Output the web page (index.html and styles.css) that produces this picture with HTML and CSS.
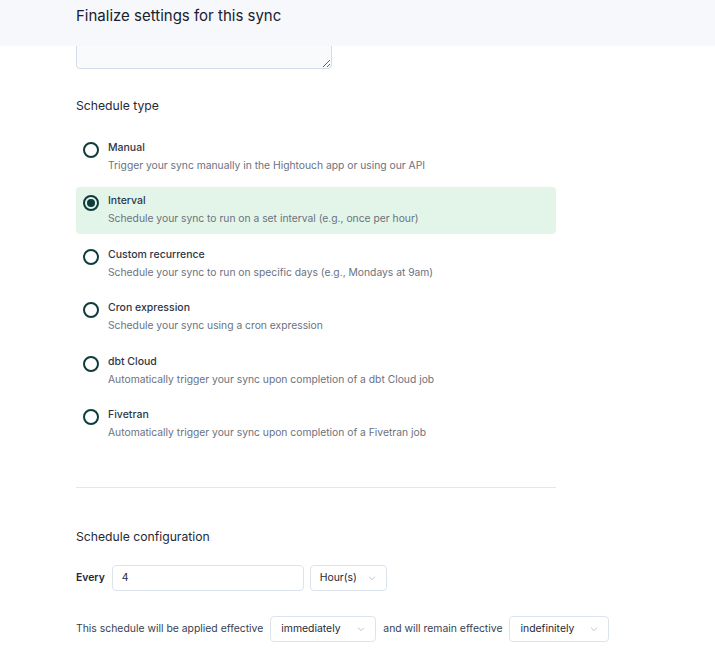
FILE: index.html
```html
<!DOCTYPE html>
<html lang="en">
<head>
    <meta charset="UTF-8">
    <meta name="viewport" content="width=device-width, initial-scale=1.0">
    <title>Finalize settings for this sync</title>
    <link rel="stylesheet" href="styles.css">
</head>
<body>
    <header class="topbar">
        <h1>Finalize settings for this sync</h1>
    </header>

    <main class="content">
        <textarea class="notes"></textarea>

        <h2 class="section-title">Schedule type</h2>
        <div class="options">
            <label class="option">
                <span class="radio"></span>
                <span class="option-text">
                    <span class="option-title">Manual</span>
                    <span class="option-desc">Trigger your sync manually in the Hightouch app or using our API</span>
                </span>
            </label>
            <label class="option selected">
                <span class="radio"></span>
                <span class="option-text">
                    <span class="option-title">Interval</span>
                    <span class="option-desc">Schedule your sync to run on a set interval (e.g., once per hour)</span>
                </span>
            </label>
            <label class="option">
                <span class="radio"></span>
                <span class="option-text">
                    <span class="option-title">Custom recurrence</span>
                    <span class="option-desc">Schedule your sync to run on specific days (e.g., Mondays at 9am)</span>
                </span>
            </label>
            <label class="option">
                <span class="radio"></span>
                <span class="option-text">
                    <span class="option-title">Cron expression</span>
                    <span class="option-desc">Schedule your sync using a cron expression</span>
                </span>
            </label>
            <label class="option">
                <span class="radio"></span>
                <span class="option-text">
                    <span class="option-title">dbt Cloud</span>
                    <span class="option-desc">Automatically trigger your sync upon completion of a dbt Cloud job</span>
                </span>
            </label>
            <label class="option">
                <span class="radio"></span>
                <span class="option-text">
                    <span class="option-title">Fivetran</span>
                    <span class="option-desc">Automatically trigger your sync upon completion of a Fivetran job</span>
                </span>
            </label>
        </div>

        <hr class="divider">

        <h2 class="section-title config-title">Schedule configuration</h2>
        <div class="row every-row">
            <span class="every">Every</span>
            <div class="input">4</div>
            <div class="select hours">Hour(s)
                <svg class="chevron" viewBox="0 0 12 12"><path d="M2.5 4.5 6 8l3.5-3.5"/></svg>
            </div>
        </div>
        <div class="row effective-row">
            <span>This schedule will be applied effective</span>
            <div class="select immediately">immediately
                <svg class="chevron" viewBox="0 0 12 12"><path d="M2.5 4.5 6 8l3.5-3.5"/></svg>
            </div>
            <span>and will remain effective</span>
            <div class="select indefinitely">indefinitely
                <svg class="chevron" viewBox="0 0 12 12"><path d="M2.5 4.5 6 8l3.5-3.5"/></svg>
            </div>
        </div>
    </main>
</body>
</html>
```

FILE: styles.css
```css
body {
    margin: 0;
    font-family: Inter, "Noto Sans", sans-serif;
    color: #1f2937;
    background: #fff;
}
.topbar {
    position: relative;
    z-index: 2;
    height: 46px;
    background: #f6f8fb;
    padding: 0 76px;
    box-sizing: border-box;
}
.topbar h1 {
    margin: 0;
    padding-top: 7px;
    font-size: 15px;
    font-weight: 400;
    color: #1a202c;
    line-height: 18px;
}
.content {
    padding: 0 76px;
}
.notes {
    display: block;
    width: 256px;
    height: 60px;
    margin-top: -37px;
    box-sizing: border-box;
    border: 1px solid #d3dce8;
    border-radius: 4px;
    background: #f8fafc;
}
.section-title {
    margin: 29px 0 0;
    font-size: 12.2px;
    font-weight: 400;
    line-height: 16px;
    color: #1f2937;
}
.options {
    display: flex;
    flex-direction: column;
    gap: 6.4px;
    width: 480px;
    margin-top: 20px;
}
.option {
    display: flex;
    align-items: flex-start;
    height: 47px;
    box-sizing: border-box;
    padding: 6px 7px;
    border-radius: 4px;
}
.option.selected {
    background: #e3f5e9;
}
.radio {
    width: 12px;
    height: 12px;
    border: 2px solid #0f3b3c;
    border-radius: 50%;
    margin-top: 2px;
    flex: none;
    position: relative;
}
.selected .radio::after {
    content: "";
    position: absolute;
    left: 2px;
    top: 2px;
    width: 8px;
    height: 8px;
    border-radius: 50%;
    background: #0f3b3c;
}
.option-text {
    display: flex;
    flex-direction: column;
    margin-left: 9px;
}
.option-title {
    font-size: 10.5px;
    font-weight: 500;
    line-height: 16px;
    color: #2d3748;
}
.option-desc {
    margin-top: 1px;
    font-size: 10.3px;
    line-height: 16px;
    color: #6b7280;
}
.divider {
    width: 480px;
    margin: 39px 0 0;
    border: 0;
    border-top: 1px solid #e5e7eb;
}
.config-title {
    margin-top: 41px;
}
.row {
    display: flex;
    align-items: center;
    font-size: 10.4px;
    color: #374151;
}
.every-row {
    margin-top: 20px;
    gap: 6px;
}
.every {
    font-weight: 600;
    color: #1f2937;
    margin-right: 1px;
}
.input,
.select {
    height: 26px;
    box-sizing: border-box;
    border: 1px solid #dde3ec;
    border-radius: 4px;
    display: flex;
    align-items: center;
    padding: 0 9px;
    color: #1f2937;
}
.input {
    width: 192px;
}
.select {
    justify-content: space-between;
}
.hours {
    width: 77px;
}
.effective-row {
    margin-top: 25px;
    gap: 7px;
}
.immediately {
    width: 106px;
    padding-left: 10px;
}
.indefinitely {
    width: 100px;
    padding-left: 10px;
}
.chevron {
    width: 10px;
    height: 10px;
    fill: none;
    stroke: #b4bfcc;
    stroke-width: 1.1;
}
```
